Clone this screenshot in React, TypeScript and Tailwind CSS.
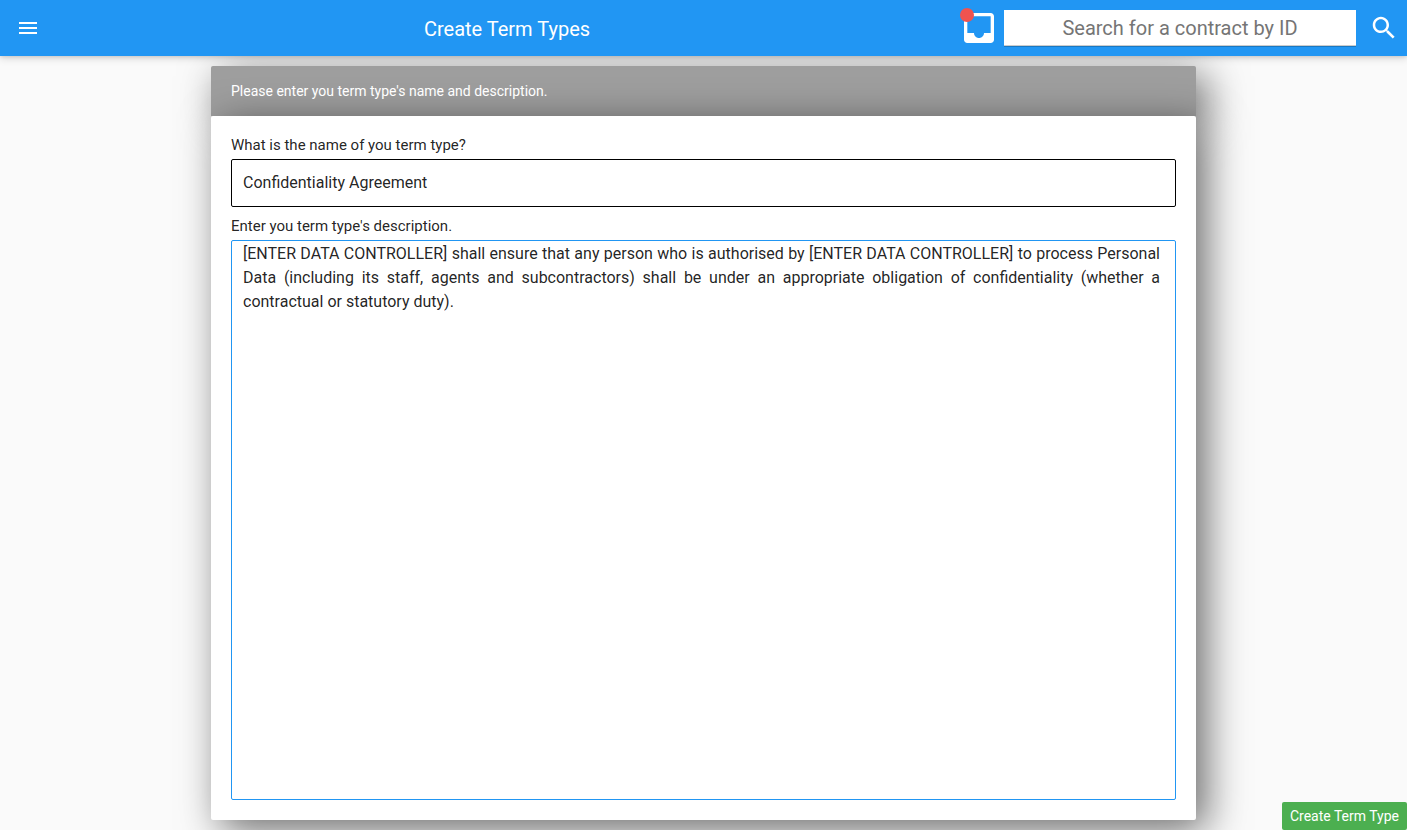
import React from "react";

export default function App() {
  return (
    <div className="flex h-[830px] w-full flex-col overflow-hidden bg-[#fafafa] font-['Roboto',sans-serif] text-black/87">
      <header className="relative z-10 flex h-14 shrink-0 items-center bg-[#2196f3] text-white shadow-[0_0_4px_rgba(0,0,0,0.14),0_2px_8px_rgba(0,0,0,0.16)]">
        <button className="ml-4 h-6 w-6" aria-label="Menu">
          <svg viewBox="0 0 24 24" className="h-6 w-6" fill="currentColor"><path d="M3 18h18v-2H3v2zm0-5h18v-2H3v2zm0-7v2h18V6H3z" /></svg>
        </button>
        <h1 className="ml-[14px] w-[905px] pl-px pt-px text-center text-[20px] leading-6">Create Term Types</h1>
        <button className="relative h-10 w-10" aria-label="Inbox">
          <svg viewBox="0 0 24 24" className="h-10 w-10" fill="currentColor"><path d="M19 3H4.99c-1.11 0-1.98.89-1.98 2L3 19c0 1.1.88 2 1.99 2H19c1.1 0 2-.9 2-2V5c0-1.11-.9-2-2-2zm0 12h-4c0 1.66-1.35 3-3 3s-3-1.34-3-3H4.99V5H19v10z" /></svg>
          <span className="absolute top-0 left-[0.5px] h-3.5 w-3.5 rounded-full bg-[#ef5350]" />
        </button>
        <input className="ml-[5px] h-9 w-[352px] bg-white text-center text-[20px] text-black shadow-[inset_0_-1px_0_rgba(0,0,0,0.2),0_1px_0_rgba(0,0,0,0.2)] placeholder:text-[#757575] placeholder:opacity-100" placeholder="Search for a contract by ID" />
        <svg viewBox="0 0 24 24" className="ml-[13px] h-[30px] w-[30px]" fill="currentColor"><path d="M15.5 14h-.79l-.28-.27C15.41 12.59 16 11.11 16 9.5 16 5.91 13.09 3 9.5 3S3 5.91 3 9.5 5.91 16 9.5 16c1.61 0 3.09-.59 4.23-1.57l.27.28v.79l5 4.99L20.49 19l-4.99-5zm-6 0C7.01 14 5 11.99 5 9.5S7.01 5 9.5 5 14 7.01 14 9.5 11.99 14 9.5 14z" /></svg>
      </header>
      <main className="mx-auto mt-2.5 w-[985px]">
        <div className="flex h-[50px] items-center rounded-t-[2px] bg-[#9e9e9e] px-5 pt-px text-[14px] text-white shadow-[10px_10px_40px_rgba(0,0,0,0.58)]">Please enter you term type's name and description.</div>
        <section className="h-[704px] rounded-[2px] bg-white px-5 pt-5 shadow-[10px_10px_40px_rgba(0,0,0,0.58)]">
          <label className="block h-[23px] text-[15px] leading-[18px]">What is the name of you term type?</label>
          <input className="block h-12 w-full rounded-[2px] border border-black px-[11px] pb-0.5 text-[16px]" defaultValue="Confidentiality Agreement" />
          <label className="mt-2.5 block h-[23px] text-[15px] leading-[18px]">Enter you term type's description.</label>
          <div className="h-[560px] rounded-[2px] border border-[#2196f3] py-px pr-[15px] pl-[11px] text-justify text-[16px] leading-6">[ENTER DATA CONTROLLER] shall ensure that any person who is authorised by [ENTER DATA CONTROLLER] to process Personal Data (including its staff, agents and subcontractors) shall be under an appropriate obligation of confidentiality (whether a contractual or statutory duty).</div>
        </section>
      </main>
      <button className="fixed right-0 bottom-0 h-7 w-[125px] rounded-[2px] bg-[#4caf50] text-[14px] text-white">Create Term Type</button>
    </div>
  );
}
